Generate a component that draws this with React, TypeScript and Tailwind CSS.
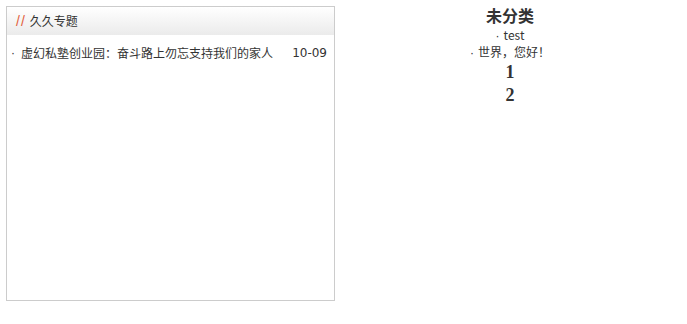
export default function App() {
  return (
    <div className="flex items-start w-[687px] h-[324px] bg-white text-[#333] font-['Microsoft_YaHei','Noto_Sans_CJK_SC',sans-serif]">
      <div className="ml-[6px] mt-[6px] w-[329px] h-[295px] border border-[#cccccc] shrink-0">
        <div className="h-[28px] flex items-center pl-[9px] bg-gradient-to-b from-white to-[#ebebeb] text-[12px]">
          <span className="text-[#e2603c] mr-[4px] font-['Liberation_Sans',sans-serif] text-[14px] tracking-[1px]">//</span>
          <span>久久专题</span>
        </div>
        <ul className="pt-[9px] pl-[4px] pr-[7px] text-[12px]">
          <li className="flex justify-between items-center h-[18px]">
            <span className="flex items-center">
              <span className="inline-block w-[10px] font-['Liberation_Sans',sans-serif]">·</span>
              虚幻私塾创业园：奋斗路上勿忘支持我们的家人
            </span>
            <span className="font-['DejaVu_Sans',sans-serif] text-[12px]">10-09</span>
          </li>
        </ul>
      </div>
      <div className="flex-1 text-center pt-[4px] pr-[2px]">
        <h2 className="text-[16px] font-bold leading-[23px]">未分类</h2>
        <p className="text-[12px] leading-[16px]">
          <span className="font-['Liberation_Sans',sans-serif] mr-[4px]">·</span>test
        </p>
        <p className="text-[12px] leading-[16px]">
          <span className="font-['Liberation_Sans',sans-serif] mr-[4px]">·</span>世界，您好！
        </p>
        <p className="font-['Liberation_Serif',serif] font-bold text-[18px] leading-[23px]">1</p>
        <p className="font-['Liberation_Serif',serif] font-bold text-[18px] leading-[23px]">2</p>
      </div>
    </div>
  );
}
